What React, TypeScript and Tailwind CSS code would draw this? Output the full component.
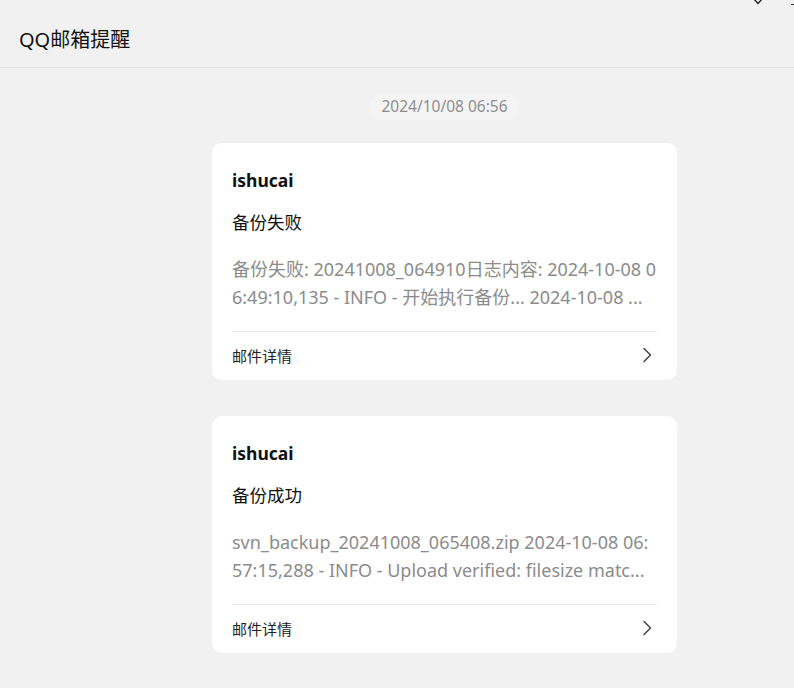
import React from "react";

type Mail = {
  sender: string;
  subject: string;
  preview: [string, string];
};

const mails: Mail[] = [
  {
    sender: "ishucai",
    subject: "备份失败",
    preview: [
      "备份失败: 20241008_064910日志内容: 2024-10-08 0",
      "6:49:10,135 - INFO - 开始执行备份... 2024-10-08 ...",
    ],
  },
  {
    sender: "ishucai",
    subject: "备份成功",
    preview: [
      "svn_backup_20241008_065408.zip 2024-10-08 06:",
      "57:15,288 - INFO - Upload verified: filesize matc...",
    ],
  },
];

const font = {
  fontFamily: '"Segoe UI", "Noto Sans", "Noto Sans CJK SC", sans-serif',
};

function ChevronRight() {
  return (
    <svg width="11" height="16" viewBox="0 0 11 16" fill="none">
      <path
        d="M2 1.5 L8.5 8 L2 14.5"
        stroke="#444"
        strokeWidth="1.5"
        strokeLinecap="round"
        strokeLinejoin="round"
      />
    </svg>
  );
}

function MailCard({ mail }: { mail: Mail }) {
  return (
    <div className="w-[465px] rounded-[10px] bg-white px-5">
      <div className="pt-[24px] text-[17.5px] font-bold leading-[26px] text-[#111]">
        {mail.sender}
      </div>
      <div className="mt-[17px] text-[17.5px] leading-[24px] text-[#111]">
        {mail.subject}
      </div>
      <div className="mt-[21px] text-[18px] leading-[28px] text-[#8b8b8b]">
        {mail.preview.map((line, i) => (
          <div key={i} className="overflow-hidden whitespace-nowrap">
            {line}
          </div>
        ))}
      </div>
      <div className="mt-[20px] h-px bg-[#e8e8e8]" />
      <div className="flex h-[48px] items-center justify-between">
        <span className="text-[15px] text-[#222]">邮件详情</span>
        <span className="mr-[4px] mt-[-2px]">
          <ChevronRight />
        </span>
      </div>
    </div>
  );
}

export default function App() {
  return (
    <div className="relative h-[688px] w-[794px] overflow-hidden bg-[#f1f1f1]" style={font}>
      {/* window controls peeking at the top edge */}
      <svg
        className="absolute left-[751px] top-[-6px]"
        width="14"
        height="12"
        viewBox="0 0 14 12"
        fill="none"
      >
        <path d="M2 4 L7 9.5 L12 4" stroke="#222" strokeWidth="1.4" />
      </svg>
      <div className="absolute left-[791px] top-[4px] h-px w-[4px] bg-[#333]" />

      <header className="flex h-[68px] items-center border-b border-[#e4e4e4] pl-[19px] pt-[12px]">
        <h1 className="text-[20px] text-[#111]">QQ邮箱提醒</h1>
      </header>

      <div className="flex flex-col pl-[212px]">
        <div className="mt-[25px] flex w-[465px] justify-center">
          <span className="flex h-[27px] items-center rounded-full bg-[#f4f4f4] px-[11px] text-[15.5px] text-[#8e8e8e]">
            2024/10/08 06:56
          </span>
        </div>
        <div className="mt-[23px] flex flex-col gap-[36px]">
          {mails.map((m, i) => (
            <MailCard key={i} mail={m} />
          ))}
        </div>
      </div>
    </div>
  );
}
